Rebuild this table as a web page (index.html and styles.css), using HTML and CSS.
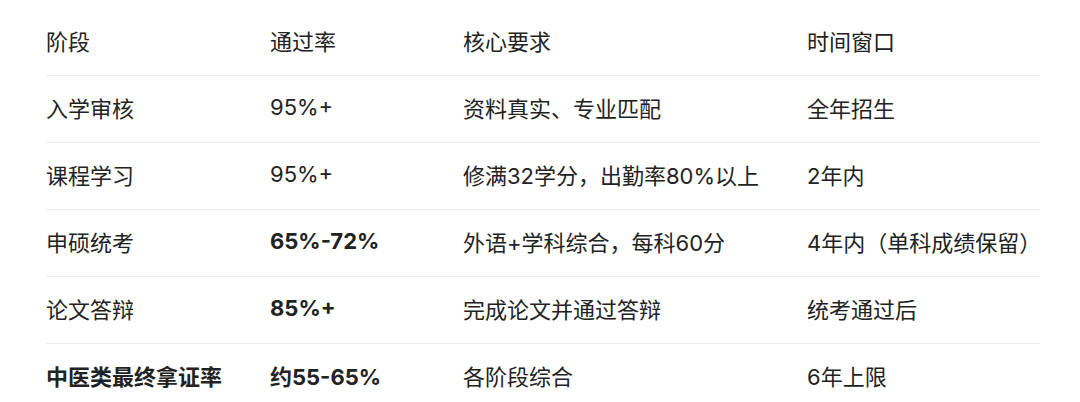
FILE: index.html
```html
<!DOCTYPE html>
<html lang="zh-CN">
<head>
<meta charset="utf-8">
<link rel="stylesheet" href="styles.css">
</head>
<body>
<div class="wrap">
<table class="tbl">
  <colgroup>
    <col class="c1"><col class="c2"><col class="c3"><col class="c4">
  </colgroup>
  <thead>
    <tr class="head"><th>阶段</th><th>通过率</th><th>核心要求</th><th>时间窗口</th></tr>
  </thead>
  <tbody>
    <tr><td>入学审核</td><td>95%+</td><td>资料真实、专业匹配</td><td>全年招生</td></tr>
    <tr><td>课程学习</td><td>95%+</td><td>修满32学分，出勤率80%以上</td><td>2年内</td></tr>
    <tr><td>申硕统考</td><td class="b">65%-72%</td><td>外语+学科综合，每科60分</td><td>4年内（单科成绩保留）</td></tr>
    <tr><td>论文答辩</td><td class="b">85%+</td><td>完成论文并通过答辩</td><td>统考通过后</td></tr>
    <tr class="last"><td class="b">中医类最终拿证率</td><td class="b">约55-65%</td><td>各阶段综合</td><td>6年上限</td></tr>
  </tbody>
</table>
</div>
</body>
</html>
```
FILE: styles.css
```css
html, body {
  margin: 0;
  padding: 0;
  background: #ffffff;
}
.wrap {
  padding: 9px 40px 0 46px;
}
.tbl {
  width: 994px;
  border-collapse: collapse;
  table-layout: fixed;
  font-family: Inter, "Noto Sans CJK SC", "Noto Sans", sans-serif;
  font-size: 22px;
  color: #222222;
}
.c1 { width: 224px; }
.c2 { width: 193px; }
.c3 { width: 344px; }
.c4 { width: 233px; }
.tbl th, .tbl td {
  padding: 0 0 4px 0;
  text-align: left;
  font-weight: 400;
  vertical-align: middle;
  white-space: nowrap;
}
.tbl tr {
  border-bottom: 1px solid #ececec;
}
.tbl tr.head { height: 66px; }
.tbl tbody tr { height: 67px; }
.tbl tr.last { border-bottom: none; }
.tbl .b { font-weight: 700; }
```
